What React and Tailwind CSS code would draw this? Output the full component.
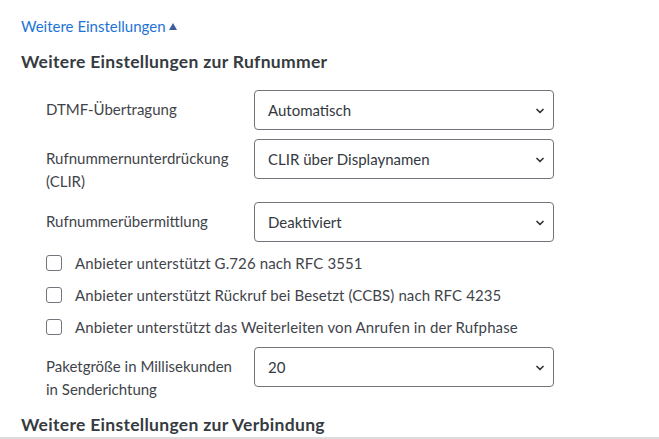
import { ChevronDown } from 'lucide-react';

const font = { fontFamily: 'Lato, "Noto Sans", sans-serif' };

const SelectBox = ({ value }) => (
  <div className="relative w-[300px] h-[40px] shrink-0 border border-[#70757b] rounded-[4px] flex items-center pl-[13px] text-[15px] text-[#33383e] bg-white">
    {value}
    <ChevronDown className="absolute right-[7px] top-[14px] w-[12px] h-[12px] text-[#33383e]" strokeWidth={3.5} />
  </div>
);

const SelectRow = ({ label, value, className = '' }) => (
  <div className={`flex items-start ${className}`}>
    <label className="w-[208px] shrink-0 pt-[8px] pr-2 text-[15px] leading-[23px] text-[#3f444a]">{label}</label>
    <SelectBox value={value} />
  </div>
);

const CheckRow = ({ label }) => (
  <label className="flex items-center h-[32px] text-[15px] tracking-[0.1px] text-[#3f444a]">
    <span className="w-[16px] h-[16px] border-[1.5px] border-[#71767c] rounded-[3px] bg-white mr-[13px]" />
    {label}
  </label>
);

export default function App() {
  return (
    <div className="w-[659px] h-[439px] bg-white overflow-hidden relative" style={font}>
      <div className="pl-[21px] pt-[15px]">
        <a className="text-[15px] leading-[22px] text-[#1e74d4] flex items-center gap-[3px]">
          Weitere Einstellungen
          <span className="inline-block w-0 h-0 border-l-[4.5px] border-r-[4.5px] border-b-[7px] border-l-transparent border-r-transparent border-b-[#3d5e9c] mt-[1px]" />
        </a>
        <h2 className="mt-[13px] text-[17.5px] leading-[24px] font-bold tracking-[0.3px] text-[#363b41]">
          Weitere Einstellungen zur Rufnummer
        </h2>
        <div className="pl-[25px] mt-[16px]">
          <SelectRow label="DTMF-Übertragung" value="Automatisch" />
          <SelectRow className="mt-[9px]" label="Rufnummernunterdrückung (CLIR)" value="CLIR über Displaynamen" />
          <SelectRow className="mt-[9px]" label="Rufnummerübermittlung" value="Deaktiviert" />
          <div className="mt-[5px]">
            <CheckRow label="Anbieter unterstützt G.726 nach RFC 3551" />
            <CheckRow label="Anbieter unterstützt Rückruf bei Besetzt (CCBS) nach RFC 4235" />
            <CheckRow label="Anbieter unterstützt das Weiterleiten von Anrufen in der Rufphase" />
          </div>
          <SelectRow className="mt-[4px]" label="Paketgröße in Millisekunden in Senderichtung" value="20" />
        </div>
        <h2 className="mt-[12px] text-[17.5px] leading-[24px] font-bold tracking-[0.3px] text-[#363b41]">
          Weitere Einstellungen zur Verbindung
        </h2>
      </div>
      <div className="absolute left-0 right-0 bottom-0 h-[2px] bg-[#dcdcdc]" />
    </div>
  );
}
